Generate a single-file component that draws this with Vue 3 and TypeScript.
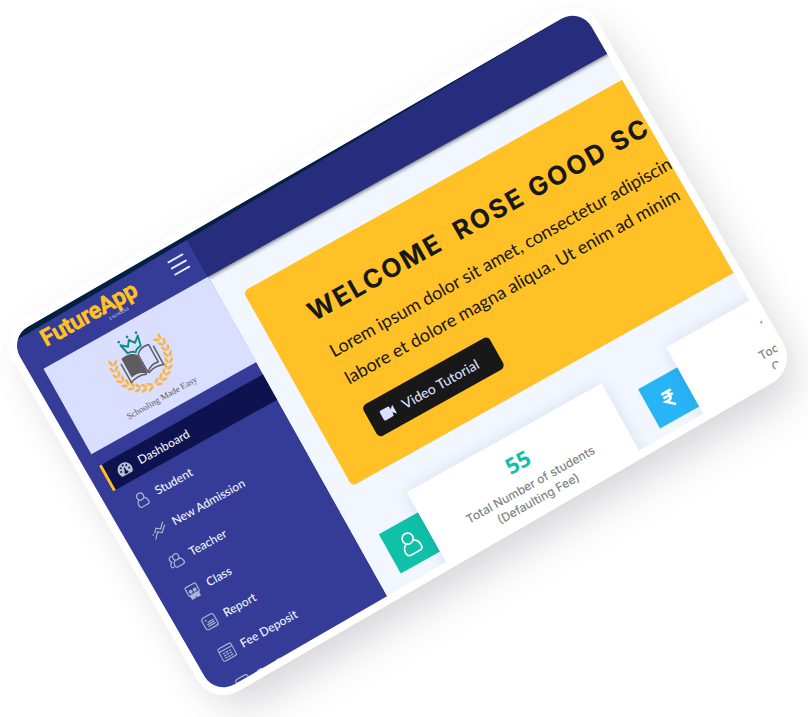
<script setup lang="ts">
interface NavItem {
  label: string
  icon: string
  active?: boolean
}

interface Stat {
  value: string
  lines: string[]
  tone: string
  icon: string
}

interface Leaf {
  x: number
  y: number
  angle: number
}

const navItems: NavItem[] = [
  { label: 'Dashboard', icon: 'gauge', active: true },
  { label: 'Student', icon: 'user' },
  { label: 'New Admission', icon: 'trend' },
  { label: 'Teacher', icon: 'users' },
  { label: 'Class', icon: 'class' },
  { label: 'Report', icon: 'report' },
  { label: 'Fee Deposit', icon: 'calendar' },
  { label: 'Fee Report', icon: 'report' },
]

const stats: Stat[] = [
  { value: '55', lines: ['Total Number of students', '(Defaulting Fee)'], tone: 'teal', icon: 'user' },
  { value: '120', lines: ["Today's Fee", 'Collection'], tone: 'blue', icon: 'rupee' },
]

// Leaves of the laurel: pairs along one arc, mirrored for the other branch.
const leaves: Leaf[] = []
for (let i = 0; i < 9; i++) {
  const deg = 99 + i * 13
  const a = (deg * Math.PI) / 180
  for (const side of [-1, 1]) {
    leaves.push({
      x: 104 + (28 + side * 2.3) * Math.cos(a),
      y: 84 + (28 + side * 2.3) * Math.sin(a),
      angle: deg + 90 - side * 30,
    })
  }
}
</script>

<template>
  <div class="stage">
    <div class="frame">
      <div class="screen">
        <div class="app">
          <aside class="sidebar">
            <div class="brand">
              <a class="logo" href="#">
                <span class="logo-name">FutureApp</span>
                <span class="logo-sub">E SCHOOLS</span>
              </a>
              <button class="menu" type="button" aria-label="Menu">
                <span></span><span></span><span></span>
              </button>
            </div>

            <div class="crest">
              <svg class="emblem" viewBox="72 55 64 62" aria-hidden="true">
                <g v-for="m in 2" :key="m" :transform="m === 2 ? 'translate(208 0) scale(-1 1)' : undefined" fill="#fbb440">
                  <ellipse
                    v-for="(l, i) in leaves"
                    :key="i"
                    rx="3.3"
                    ry="1.4"
                    :transform="`translate(${l.x} ${l.y}) rotate(${l.angle})`"
                  />
                </g>
                <path
                  d="M96 71.500 L93.600 61 L99.500 66 L103.500 60.500 L107.500 66 L113.400 61 L111 71.500 Q106 71.500 103.500 74.500 Q101 71.500 96 71.500 Z"
                  fill="none"
                  stroke="#0c8c84"
                  stroke-width="1.9"
                  stroke-linejoin="round"
                />
                <g fill="#0c8c84">
                  <circle cx="93.600" cy="57.500" r="1.300" />
                  <circle cx="103.500" cy="57" r="1.300" />
                  <circle cx="113.400" cy="57.500" r="1.300" />
                </g>
                <g fill="none" stroke="#5d5d60" stroke-width="1.500" stroke-linejoin="round" stroke-linecap="round">
                  <path d="M88.500 74 Q98 72 103 78 V98 Q97 92 88.500 94 Z" fill="#5d5d60" />
                  <path d="M85 78 V99 Q94 95.500 102 99" />
                  <path d="M118.500 74 Q109 72 104.500 78 V98 Q110 92 118.500 94 Z" />
                  <path d="M122 78 V99 Q113 95.500 105.500 99" />
                </g>
              </svg>
              <p class="motto">Schooling Made Easy</p>
            </div>

            <nav class="nav">
              <a v-for="item in navItems" :key="item.label" href="#" class="nav-item" :class="{ active: item.active }">
                <svg v-if="item.icon === 'gauge'" class="ico" viewBox="0 0 16 16" aria-hidden="true">
                  <path d="M8 1.500A7.500 7.500 0 0 0 1.300 12.500Q1.700 14 3 14H13Q14.300 14 14.700 12.500A7.500 7.500 0 0 0 8 1.500Z" fill="#b3c3d6" />
                  <g fill="#0e1350">
                    <circle cx="3.500" cy="9" r="1" /><circle cx="4.800" cy="5.500" r="1" /><circle cx="8" cy="4" r="1" />
                    <circle cx="11.200" cy="5.500" r="1" /><circle cx="12.500" cy="9" r="1" />
                    <path d="M7.500 6.500H8.500L9 10A2 2 0 0 1 9.500 13H6.500A2 2 0 0 1 7 10Z" />
                  </g>
                </svg>
                <svg v-else class="ico line" viewBox="0 0 16 16" aria-hidden="true">
                  <template v-if="item.icon === 'user'">
                    <circle cx="8" cy="4.700" r="3.500" />
                    <path d="M5.400 7.200Q2.500 8.500 2.500 12.500Q2.500 15 5 15H11Q13.500 15 13.500 12.500Q13.500 8.500 10.600 7.200" />
                  </template>
                  <template v-else-if="item.icon === 'trend'">
                    <path d="M1 14.500L6 9L9.500 12L15.500 6.500" />
                    <path d="M3 8.500L6.500 5L10 8L15 3" />
                    <path d="M0 9.500H1" />
                  </template>
                  <template v-else-if="item.icon === 'users'">
                    <circle cx="9.500" cy="4.800" r="3.200" />
                    <path d="M7.300 7.500Q4.500 9 4.500 12Q4.500 14.500 7 14.500H12.500Q15 14.500 15 12Q15 8.500 11.700 7.300" />
                    <path d="M6 2Q2.500 1.800 2.500 5Q2.500 6.500 3.700 7.400Q1 8.500 1 11.500Q1 13 3 13" />
                  </template>
                  <template v-else-if="item.icon === 'class'">
                    <path d="M2 9V3Q2 1.500 3.500 1.500H12.500Q14 1.500 14 3V9" />
                    <g class="solid">
                      <circle cx="5.700" cy="7.500" r="2" /><circle cx="10.300" cy="7.500" r="2" />
                      <path d="M1 9.500Q4 11 8 10Q12 11 15 9.500L13 12.500V15.500H8.500V14H7.500V15.500H3V12.500Z" />
                    </g>
                  </template>
                  <template v-else-if="item.icon === 'report'">
                    <rect x="1" y="1.500" width="13.500" height="13" rx="2.500" />
                    <path d="M4 5H5M6 7.500H12M4.500 9.500H12M4.500 11.500H12" />
                  </template>
                  <template v-else>
                    <rect x=".6" y="1" width="15" height="14" rx="2" />
                    <path d="M1 4.500H15" />
                    <path d="M4 7.500H12.500M4 10H12.500M4 12.500H12.500" stroke-dasharray="1.500 1.800" />
                  </template>
                </svg>
                <span>{{ item.label }}</span>
              </a>
            </nav>
          </aside>

          <div class="content">
            <header class="topbar"></header>
            <main class="main">
              <section class="banner">
                <h1>WELCOME&nbsp; ROSE GOOD SCHOOL</h1>
                <p>
                  Lorem ipsum dolor sit amet, consectetur adipiscing elit<br />
                  labore et dolore magna aliqua. Ut enim ad minim
                </p>
                <button class="video" type="button">
                  <svg viewBox="0 0 16 14" aria-hidden="true">
                    <rect x="0" y="1" width="12" height="12" rx="2" />
                    <path d="M10 7L16 1.500V12.500Z" />
                  </svg>
                  Video Tutorial
                </button>
              </section>

              <section class="stats">
                <article v-for="s in stats" :key="s.value" class="stat">
                  <div class="badge" :class="s.tone">
                    <svg v-if="s.icon === 'user'" viewBox="0 0 26 26" aria-hidden="true">
                      <circle cx="13" cy="7.500" r="6" />
                      <path d="M8.500 12Q3.500 14 3.500 20.500Q3.500 25 8 25H18Q22.500 25 22.500 20.500Q22.500 14 17.500 12" />
                    </svg>
                    <svg v-else class="rupee" viewBox="0 0 26 26" aria-hidden="true">
                      <path d="M6 4H20M6 9.500H20M6 4H10Q15.500 4 15.500 9.500Q15.500 15 10 15H7L17 24" />
                    </svg>
                  </div>
                  <div class="card">
                    <strong :class="s.tone">{{ s.value }}</strong>
                    <p><template v-for="(line, i) in s.lines" :key="line"><br v-if="i > 0" />{{ line }}</template></p>
                  </div>
                </article>
              </section>
            </main>
          </div>
        </div>
      </div>
    </div>
  </div>
</template>

<style>
body {
  background: #fff;
  overflow: hidden;
}
</style>

<style scoped>
* {
  box-sizing: border-box;
}

.stage {
  display: flex;
  height: 100vh;
  padding: 137px 72px 151px 60px;
  font-family: Lato, "Open Sans", sans-serif;
  overflow: hidden;
}

.frame {
  flex: 1;
  min-width: 0;
  padding: 8px;
  border-radius: 30px;
  background: #fff;
  box-shadow: 6px 28px 44px -8px rgba(25, 30, 45, 0.15), 0 8px 40px rgba(25, 30, 45, 0.04);
  transform: rotate(-30deg);
}

.screen {
  position: relative;
  height: 100%;
  border-radius: 22px;
  overflow: hidden;
}

/* Dark bezel along the top edge, thinning out to the right. */
.screen::after {
  content: "";
  position: absolute;
  inset: 0 0 auto;
  height: 6px;
  background: #03203f;
  clip-path: polygon(0 0, 100% 0, 40% 60%, 0 100%);
}

.app {
  display: grid;
  grid-template-columns: 204px 1fr;
  width: calc(100% + 20px);
  height: calc(100% + 40px);
  margin-top: -12px;
  transform: rotate(0.8deg);
  transform-origin: 0 12px;
}

.sidebar {
  background: #343c97;
}

.brand {
  display: flex;
  align-items: flex-end;
  justify-content: space-between;
  height: 56px;
  padding: 0 11px 9px 28px;
}

.logo {
  display: flex;
  flex-direction: column;
  color: #ffc125;
  text-decoration: none;
}

.logo-name {
  font-family: Roboto, sans-serif;
  font-size: 23px;
  font-weight: 500;
  line-height: 24px;
  -webkit-text-stroke: 1px #ffc125;
}

.logo-sub {
  align-self: flex-end;
  margin-right: 16px;
  color: #dadeff;
  font-size: 4px;
  line-height: 4px;
}

.menu {
  display: flex;
  flex-direction: column;
  gap: 5px;
  width: 18px;
  margin-bottom: 8px;
  padding: 0;
  border: 0;
  background: none;
}

.menu span {
  height: 2px;
  border-radius: 1px;
  background: #e9ecff;
}

.crest {
  display: flex;
  flex-direction: column;
  align-items: center;
  height: 98px;
  margin-left: 15px;
  padding: 11px 11px 0 0;
  background: #dadeff;
}

.emblem {
  width: 64px;
  height: 62px;
}

.motto {
  margin: 2px 0 0;
  color: #5d5d60;
  font-family: "Liberation Serif", serif;
  font-size: 9px;
  line-height: 16px;
}

.nav {
  display: flex;
  flex-direction: column;
  gap: 6px;
  margin: 14px 0 0 16px;
}

.nav-item {
  display: flex;
  align-items: center;
  gap: 8px;
  height: 29px;
  padding-left: 10px;
  border-left: 3px solid transparent;
  color: #f1f4ff;
  font-size: 12px;
  font-weight: 500;
  text-decoration: none;
  white-space: nowrap;
}

.nav-item.active {
  border-left-color: #ffc125;
  background: #0e1350;
}

.ico {
  width: 16px;
  height: 16px;
}

.ico.line {
  fill: none;
  stroke: #a9b8d2;
  stroke-width: 1.2;
  stroke-linecap: round;
  stroke-linejoin: round;
}

.ico .solid {
  fill: #a9b8d2;
  stroke: none;
}

.content {
  display: flex;
  flex-direction: column;
  min-width: 0;
}

.topbar {
  position: relative;
  flex: none;
  height: 56px;
  margin-left: -1px;
  background: #262d7c;
  box-shadow: 0 1px 4px rgba(0, 0, 0, 0.6);
  clip-path: inset(0 0 -10px 0);
}

.main {
  flex: 1;
  padding: 30px 0 0 23px;
  background: #f1f6ff;
}

.banner {
  height: 223px;
  padding: 34px 0 0 47px;
  border-radius: 5px 0 0 5px;
  background: #ffc125;
  color: #181818;
  white-space: nowrap;
  overflow: hidden;
}

.banner h1 {
  margin: 0;
  font-family: Inter, sans-serif;
  font-size: 26px;
  font-weight: 700;
  letter-spacing: 2px;
  line-height: 36px;
}

.banner p {
  margin: 10px 0 16px;
  font-size: 18px;
  line-height: 31px;
}

.video {
  display: flex;
  align-items: center;
  gap: 9px;
  height: 36px;
  padding: 0 22px 0 13px;
  border: 0;
  border-radius: 5px;
  background: #181818;
  color: #dadeff;
  font-family: inherit;
  font-size: 14px;
  font-weight: 500;
}

.video svg {
  width: 15px;
  height: 13px;
  fill: #dadeff;
}

.stats {
  display: flex;
  gap: 29px;
  margin-top: 32px;
}

.stat {
  display: flex;
  flex: none;
  align-items: flex-start;
}

.badge {
  display: grid;
  place-items: center;
  width: 45px;
  height: 45px;
  margin-top: 23px;
}

.badge.teal {
  background: #0fc1a9;
}

.badge.blue {
  background: #29b4f6;
}

.badge svg {
  width: 24px;
  height: 24px;
  fill: none;
  stroke: #fff;
  stroke-width: 1.8;
  stroke-linecap: round;
}

.badge .rupee {
  width: 20px;
  height: 20px;
  stroke-width: 3.4;
  stroke-linecap: butt;
}

.card {
  width: 223px;
  height: 110px;
  padding-top: 13px;
  background: #fff;
  box-shadow: 0 0 16px rgba(40, 60, 110, 0.12);
  text-align: center;
}

.card strong {
  display: block;
  font-family: "Open Sans", sans-serif;
  font-size: 22px;
  font-weight: 700;
  line-height: 28px;
}

.card strong.teal {
  color: #0fc1a9;
}

.card strong.blue {
  color: #29b4f6;
}

.card p {
  margin: 5px 0 0;
  color: #7d8886;
  font-family: Inter, sans-serif;
  font-size: 12px;
  font-weight: 500;
  line-height: 16px;
}
</style>
